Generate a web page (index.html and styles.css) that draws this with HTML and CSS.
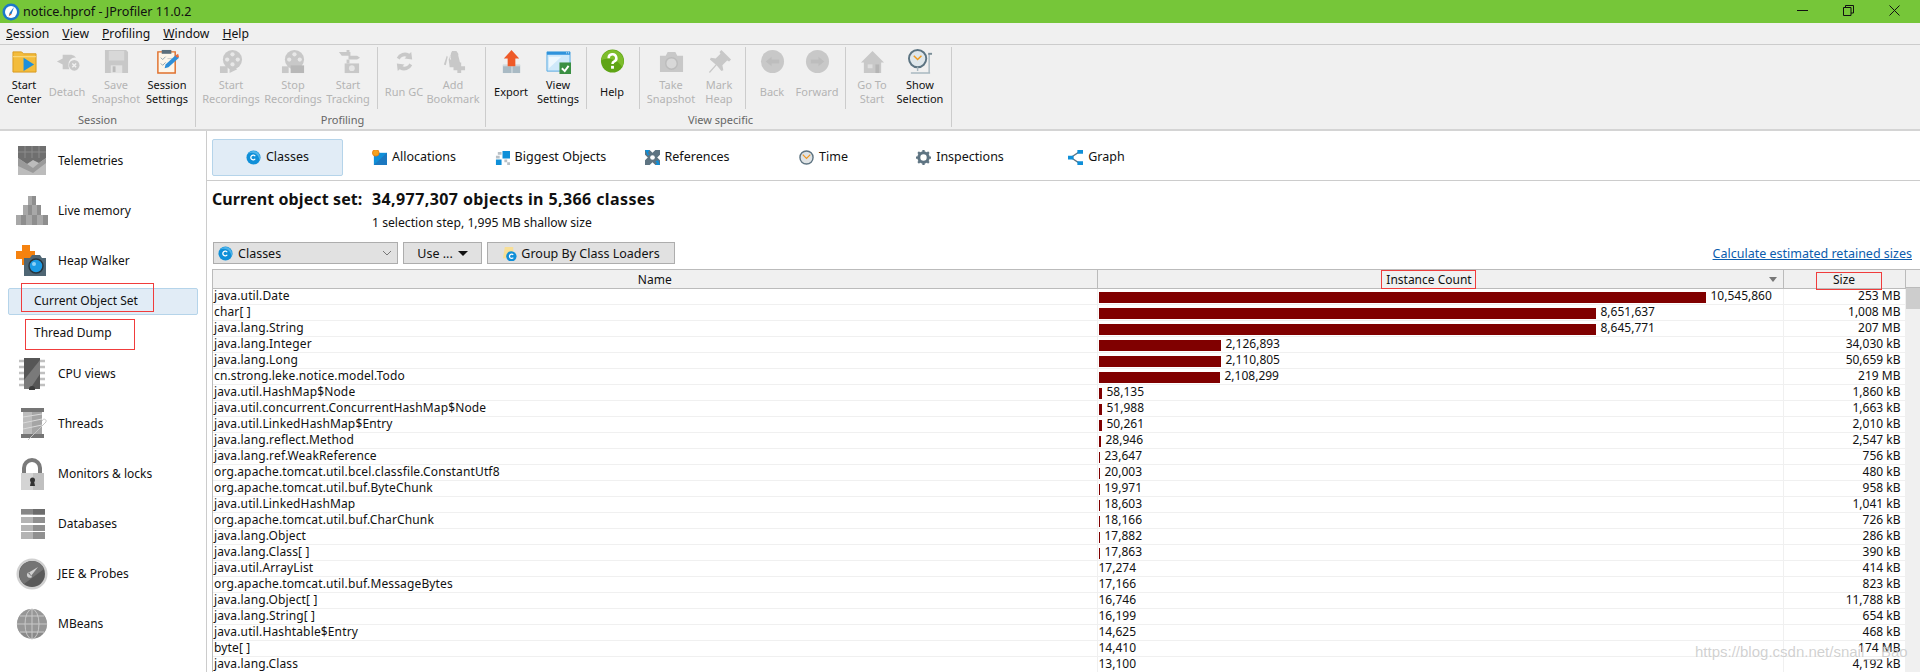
FILE: index.html
```html
<!DOCTYPE html>
<html lang="en">
<head>
    <meta charset="UTF-8">
    <title>notice.hprof - JProfiler 11.0.2</title>
    <link rel="stylesheet" href="styles.css">
</head>
<body>

    <svg class="defs" width="0" height="0">
        <symbol id="class-icon" viewBox="0 0 16 16">
            <circle cx="8" cy="8" r="7.5" fill="#0f8fd8"/>
            <path d="M8 1a7 7 0 0 1 6 10.500A8 8 0 0 0 2 4 7 7 0 0 1 8 1z" fill="#4fb4ea"/>
            <path d="M9.800 6.700A2.500 2.500 0 1 0 9.800 9.300" fill="none" stroke="#fff" stroke-width="1.400"/>
        </symbol>
    </svg>

    <div class="titlebar">
        <svg class="app-icon" width="18" height="18" viewBox="0 0 18 18">
            <circle cx="9" cy="9" r="8.500" fill="#1c78c8"/>
            <circle cx="9" cy="9" r="6" fill="#fff"/>
            <path d="M12 4 9.500 11 7 12.500 7.500 10z" fill="#1c78c8"/>
            <path d="M6.500 13.500 8 10.500 9.500 11.500z" fill="#e8622a"/>
        </svg>
        <span class="title-text">notice.hprof - JProfiler 11.0.2</span>
        <div class="win-buttons">
            <svg width="11" height="11" viewBox="0 0 11 11"><path d="M0 5.500h11" stroke="#111" fill="none"/></svg>
            <svg width="11" height="11" viewBox="0 0 11 11"><path d="M.5 2.500h7.500v8H.5zM2.500 2.500V.5h8v7.500H8" stroke="#111" fill="none"/></svg>
            <svg width="11" height="11" viewBox="0 0 11 11"><path d="M.5.5l10 10M10.500.5l-10 10" stroke="#111" fill="none"/></svg>
        </div>
    </div>

    <div class="menubar">
        <span class="menu-item"><u>S</u>ession</span>
        <span class="menu-item"><u>V</u>iew</span>
        <span class="menu-item"><u>P</u>rofiling</span>
        <span class="menu-item"><u>W</u>indow</span>
        <span class="menu-item"><u>H</u>elp</span>
    </div>

    <div class="toolbar">
        <div class="tb-group group-session">
            <div class="tb-row">
                <div class="tb-btn w48">
                    <svg class="tb-icon" viewBox="0 0 26 26"><path d="M1 3h9l2 2h13v19H1z" fill="#f3bc3c" stroke="#d99a1e"/><path d="M1 8h24" stroke="#fbe08c"/><path d="M12 9l11 7-11 7z" fill="#1c8fdc"/></svg>
                    <span class="tb-label">Start<br>Center</span>
                </div>
                <div class="tb-btn w38 off">
                    <svg class="tb-icon" viewBox="0 0 26 26"><path d="M2 13l6-3V6h9a7 7 0 0 1 5 3 7 7 0 0 0-8 8 7 7 0 0 0 1 4H8v-5z" fill="#c8c8c8"/><circle cx="20" cy="17" r="5.500" fill="#c8c8c8"/><path d="M18 15l4 4M22 15l-4 4" stroke="#f0f0f0" stroke-width="1.500"/></svg>
                    <span class="tb-label">Detach</span>
                </div>
                <div class="tb-btn w60 off">
                    <svg class="tb-icon" viewBox="0 0 26 26"><path d="M1 1h22l2 2v22H1z" fill="#c8c8c8"/><path d="M5 2h16v10H5z" fill="#d8d8d8"/><path d="M7 17h12v8H7z" fill="#e2e2e2"/><path d="M9 18h3v6H9z" fill="#bbb"/></svg>
                    <span class="tb-label">Save<br>Snapshot</span>
                </div>
                <div class="tb-btn w42">
                    <svg class="tb-icon" viewBox="0 0 26 26"><path d="M3 3h18v22H3z" fill="#fdf6ea" stroke="#e0702c" stroke-width="1.500"/><path d="M7 1h10v4H7z" fill="#5c6f7c"/><path d="M6 9l2 2 3-3M6 15l2 2 3-3" stroke="#8fa4b0" fill="none"/><path d="M13 10h5M13 16h3" stroke="#c8c8c8"/><path d="M10 20l1-4 11-10 3 3-11 10z" fill="#2f8fd8"/><path d="M21 7l3-2 1 3-2 1z" fill="#ea6a3c"/></svg>
                    <span class="tb-label">Session<br>Settings</span>
                </div>
            </div>
            <div class="tb-caption">Session</div>
        </div>

        <div class="tb-group group-profiling">
            <div class="tb-row">
                <div class="tb-btn w62 off">
                    <svg class="tb-icon" viewBox="0 0 26 26"><circle cx="14" cy="11" r="10" fill="#c8c8c8"/><circle cx="14" cy="5.500" r="2.200" fill="#e8e8e8"/><circle cx="8.500" cy="11" r="2.200" fill="#e8e8e8"/><circle cx="19.500" cy="11" r="2.200" fill="#e8e8e8"/><circle cx="14" cy="16" r="2.200" fill="#e8e8e8"/><path d="M1 18h8v7H1zM11 17l8 4-8 4z" fill="#c8c8c8"/></svg>
                    <span class="tb-label">Start<br>Recordings</span>
                </div>
                <div class="tb-btn w62 off">
                    <svg class="tb-icon" viewBox="0 0 26 26"><circle cx="14" cy="11" r="10" fill="#c8c8c8"/><circle cx="14" cy="5.500" r="2.200" fill="#e8e8e8"/><circle cx="8.500" cy="11" r="2.200" fill="#e8e8e8"/><circle cx="19.500" cy="11" r="2.200" fill="#e8e8e8"/><path d="M1 18h7v7H1z" fill="#c8c8c8"/><path d="M10 17h14v8H10z" fill="#b8b8b8"/></svg>
                    <span class="tb-label">Stop<br>Recordings</span>
                </div>
                <div class="tb-btn w48 mr3 off">
                    <svg class="tb-icon" viewBox="0 0 26 26"><path d="M11 1h3v6h-3zM3 3h12v4H6zM13 7h9l3 2-3 2h-9z" fill="#c8c8c8"/><path d="M11 11h3v4h-3z" fill="#c8c8c8"/><path d="M9 15h15v10H9z" fill="#c8c8c8"/><circle cx="16.500" cy="20" r="3" fill="#e6e6e6"/></svg>
                    <span class="tb-label">Start<br>Tracking</span>
                </div>
                <div class="tb-sep"></div>
                <div class="tb-btn w48 off">
                    <svg class="tb-icon" viewBox="0 0 26 26"><path d="M5 9a9 9 0 0 1 13-4l2-2 1 8-8-1 2-2a5.500 5.500 0 0 0-7 3zM21 17a9 9 0 0 1-13 4l-2 2-1-8 8 1-2 2a5.500 5.500 0 0 0 7-3z" fill="#c8c8c8"/></svg>
                    <span class="tb-label">Run GC</span>
                </div>
                <div class="tb-btn w50 off">
                    <svg class="tb-icon" viewBox="0 0 26 26"><path d="M11 2h5l2 3v14h-9l-1-8zM3 16l3-9 1 1-2 9zM15 6l3 1 2 8-2 1z" fill="#c8c8c8"/><path d="M17 14h4v4h4v4h-4v3h-4v-3h-4v-4h4z" fill="#c8c8c8"/><path d="M11 2c-2 3-2 6-1 9" stroke="#f0f0f0" fill="none"/></svg>
                    <span class="tb-label">Add<br>Bookmark</span>
                </div>
            </div>
            <div class="tb-caption">Profiling</div>
        </div>

        <div class="tb-group group-view">
            <div class="tb-row">
                <div class="tb-btn w42">
                    <svg class="tb-icon" viewBox="0 0 26 26"><path d="M4 17h18v8H4z" fill="#a9bac4"/><path d="M13 17h1v8h-1z" fill="#e0e6ea"/><path d="M4 16h18v2H4z" fill="#d2dade"/><path d="M13 1l8 9h-4v8H9v-8H5z" fill="#ee5a28"/></svg>
                    <span class="tb-label">Export</span>
                </div>
                <div class="tb-btn w52">
                    <svg class="tb-icon" viewBox="0 0 26 26"><path d="M1 3h24v20H1z" fill="#cfe9fa" stroke="#55a9e2"/><path d="M1 3h24v3H1z" fill="#2f93dc"/><path d="M21 4h1M23 4h1" stroke="#fff"/><path d="M3 20 16 8H3z" fill="#eef8fe"/><path d="M14 14h12v12H14z" fill="#3a8f43"/><path d="M16.500 20l3 3 4-5.500" fill="none" stroke="#fff" stroke-width="2"/></svg>
                    <span class="tb-label">View<br>Settings</span>
                </div>
                <div class="tb-sep"></div>
                <div class="tb-btn w46 mr2">
                    <svg class="tb-icon" viewBox="0 0 26 26"><circle cx="13" cy="12.500" r="12" fill="#5ea415"/><path d="M13 1a12 12 0 0 1 10 18A16 16 0 0 0 1 12 12 12 0 0 1 13 1z" fill="#7dbd2c"/><path d="M9 9.500a4 4 0 1 1 5.500 3.700c-1 .5-1.500 1-1.500 2.300" fill="none" stroke="#fff" stroke-width="2.600"/><path d="M11.500 17.500h3v3h-3z" fill="#fff"/></svg>
                    <span class="tb-label">Help</span>
                </div>
                <div class="tb-sep"></div>
                <div class="tb-btn w58 off">
                    <svg class="tb-icon" viewBox="0 0 26 26"><path d="M1 7h6l2-4h8l2 4h6v17H1z" fill="#c8c8c8"/><circle cx="13" cy="15" r="6" fill="#d8d8d8" stroke="#bcbcbc" stroke-width="1.500"/></svg>
                    <span class="tb-label">Take<br>Snapshot</span>
                </div>
                <div class="tb-btn w38 mr5 off">
                    <svg class="tb-icon" viewBox="0 0 26 26"><path d="M15 1l10 10-2 2-2-1-5 5 1 5-2 1-5-6-7 8-1-1 7-8-6-5 1-2 5 1 5-5-1-2z" fill="#c8c8c8"/></svg>
                    <span class="tb-label">Mark<br>Heap</span>
                </div>
                <div class="tb-sep"></div>
                <div class="tb-btn w48 off">
                    <svg class="tb-icon" viewBox="0 0 26 26"><circle cx="13" cy="13" r="12" fill="#c8c8c8"/><path d="M6 13l6-5v3h8v4h-8v3z" fill="#bdbdbd"/></svg>
                    <span class="tb-label">Back</span>
                </div>
                <div class="tb-btn w42 mr5 off">
                    <svg class="tb-icon" viewBox="0 0 26 26"><circle cx="13" cy="13" r="12" fill="#c8c8c8"/><path d="M20 13l-6-5v3H6v4h8v3z" fill="#bdbdbd"/></svg>
                    <span class="tb-label">Forward</span>
                </div>
                <div class="tb-sep"></div>
                <div class="tb-btn w48 off">
                    <svg class="tb-icon" viewBox="0 0 26 26"><path d="M13 2l12 12h-3v11H4V14H1z" fill="#c8c8c8"/><path d="M8 16h5v4H8z" fill="#dedede"/><path d="M16 16h4v9h-4z" fill="#b5b5b5"/></svg>
                    <span class="tb-label">Go To<br>Start</span>
                </div>
                <div class="tb-btn w48">
                    <svg class="tb-icon" viewBox="0 0 26 26"><circle cx="10" cy="10" r="9" fill="#dfe7eb" stroke="#5c7482" stroke-width="2"/><path d="M6 7l4 4 4-4" fill="none" stroke="#ef9a1e" stroke-width="1.500"/><path d="M10 19v4M3 25h20M22 5v20" stroke="#a8b8c0" stroke-width="1.500"/><path d="M21 5h4" stroke="#7a8e98" stroke-width="2"/></svg>
                    <span class="tb-label">Show<br>Selection</span>
                </div>
            </div>
            <div class="tb-caption">View specific</div>
        </div>
    </div>

    <div class="main">
        <div class="sidebar">
            <div class="nav-item">
                <svg class="nav-icon" viewBox="0 0 32 32"><path d="M2 1h28v29H2z" fill="#bcbcbc"/><path d="M2 1h28v12l-7 5-6-3-6 4-9-6z" fill="#6f6f6f"/><path d="M2 13l9 6 6 4 6-5 7-5v5l-13 10L2 21z" fill="#9a9a9a"/><path d="M9 1v12M16 1v12M23 1v12M2 7h28" stroke="#8c8c8c"/></svg>
                <span>Telemetries</span>
            </div>
            <div class="nav-item">
                <svg class="nav-icon" viewBox="0 0 32 32"><path d="M12 1h8v9h-8zM7 10h9v10H7zM16 10h9v10h-9zM0 20h10v10H0zM10 20h11v10H10zM21 20h11v10H21z" fill="#a8a8a8"/><path d="M16 1h4v9h-4zM12 10h4v10h-4zM21 10h4v10h-4zM5 20h5v10H5zM16 20h5v10h-5zM27 20h5v10h-5z" fill="#8e8e8e"/></svg>
                <span>Live memory</span>
            </div>
            <div class="nav-item">
                <svg class="nav-icon" viewBox="0 0 32 32"><path d="M6 0h8v6h5v8h-6v6H6v-6H0V6h6z" fill="#f5820f"/><path d="M8 13h6l2-3h8l2 3h4v18H8z" fill="#4f6674"/><circle cx="20" cy="21" r="7" fill="#1c9ae4" stroke="#27343c" stroke-width="1.500"/><circle cx="18" cy="19" r="2" fill="#8fd2f7"/></svg>
                <span>Heap Walker</span>
            </div>
            <div class="sub-item selected">Current Object Set</div>
            <div class="sub-item thread-dump">Thread Dump</div>
            <div class="nav-item">
                <svg class="nav-icon" viewBox="0 0 32 32"><path d="M8 0h16v31H8z" fill="#565656"/><path d="M8 22 24 2v14L14 31H8z" fill="#7a7a7a"/><path d="M3 3h5M3 9h5M3 15h5M3 21h5M3 27h5M24 3h5M24 9h5M24 15h5M24 21h5M24 27h5" stroke="#c0c0c0" stroke-width="2.500"/><circle cx="16" cy="31" r="3" fill="#3c3c3c"/></svg>
                <span>CPU views</span>
            </div>
            <div class="nav-item">
                <svg class="nav-icon" viewBox="0 0 32 32"><path d="M5 0h23v4H5zM5 26h23v4H5z" fill="#757575"/><path d="M7 4h19v22H7z" fill="#bcbcbc"/><path d="M16 4h10v22H16z" fill="#a5a5a5"/><path d="M7 9l19-3M7 15l19-4M7 21l19-4" stroke="#dadada"/><path d="M12 32 30 14c1-3-3-4-4-1" stroke="#c4c4c4" fill="none"/></svg>
                <span>Threads</span>
            </div>
            <div class="nav-item">
                <svg class="nav-icon" viewBox="0 0 32 32"><path d="M8 16V10a8 8 0 0 1 16 0v6" fill="none" stroke="#7a7a7a" stroke-width="4"/><path d="M5 15h23v17H5z" fill="#d4d4d4"/><path d="M17 15h11v17H17z" fill="#c0c0c0"/><circle cx="16.500" cy="22" r="2.500" fill="#333"/><path d="M15 23h3l1 5h-5z" fill="#333"/></svg>
                <span>Monitors &amp; locks</span>
            </div>
            <div class="nav-item">
                <svg class="nav-icon" viewBox="0 0 32 32"><path d="M5 1h12v6H5zM5 9h12v6H5zM5 17h12v6H5zM5 24h12v7H5z" fill="#b4b4b4"/><path d="M17 1h12v6H17zM17 9h12v6H17zM17 17h12v6H17zM17 24h12v7H17z" fill="#909090"/><path d="M5 1h24v5H5z" fill-opacity=".25"/></svg>
                <span>Databases</span>
            </div>
            <div class="nav-item">
                <svg class="nav-icon" viewBox="0 0 32 32"><circle cx="16" cy="16" r="15.500" fill="#d0d0d0"/><circle cx="16" cy="16" r="13" fill="#5a5a5a"/><path d="M16 3a13 13 0 0 1 12 8L8 26A13 13 0 0 1 16 3z" fill="#747474"/><path d="M22 9l-7 9-3-3zM13 14a3 3 0 1 0 3 5z" fill="#cfcfcf"/></svg>
                <span>JEE &amp; Probes</span>
            </div>
            <div class="nav-item">
                <svg class="nav-icon" viewBox="0 0 32 32"><circle cx="16" cy="16" r="15" fill="#8a8a8a"/><path d="M16 1a15 15 0 0 1 12 24L4 25A15 15 0 0 1 16 1z" fill="#a0a0a0" fill-opacity=".6"/><path d="M16 1v30M1 16h30M4 8h24M4 24h24" stroke="#c8c8c8"/><ellipse cx="16" cy="16" rx="7" ry="15" fill="none" stroke="#c8c8c8"/></svg>
                <span>MBeans</span>
            </div>
        </div>

        <div class="content">
            <div class="tabs">
                <div class="tab active"><svg class="tab-icon" viewBox="0 0 16 16"><use href="#class-icon"/></svg><span>Classes</span></div>
                <div class="tab"><svg class="tab-icon" viewBox="0 0 16 16"><path d="M2 3h14v13H2z" fill="#0f8fd8"/><path d="M2 16 16 3v13z" fill="#1b78c0"/><circle cx="4" cy="3" r="3.500" fill="#f5a21f" stroke="#e87f10"/></svg><span>Allocations</span></div>
                <div class="tab"><svg class="tab-icon" viewBox="0 0 16 16"><path d="M8 1h8v8H8zM1 10h6v6H1z" fill="#0f8fd8"/><path d="M3 2h4v3H3zM1 6h4v3H1zM10 10h3v3h-3zM13 13h3v3h-3z" fill="#b8c0c6"/></svg><span>Biggest Objects</span></div>
                <div class="tab"><svg class="tab-icon" viewBox="0 0 16 16"><path d="M0 0h5l3 3 3-3h5v5l-3 3 3 3v5h-5l-3-3-3 3H0v-5l3-3-3-3z" fill="#5e7482"/><path d="M0 0h5L3 3 5 5 3 6zM16 16h-5l2-2-2-2 3-1z" fill="#0f8fd8"/><circle cx="8" cy="8" r="2.500" fill="#fff"/></svg><span>References</span></div>
                <div class="tab"><svg class="tab-icon" viewBox="0 0 16 16"><circle cx="8" cy="8" r="7" fill="#dfe3e5" stroke="#5e7482" stroke-width="1.500"/><path d="M4 5l4 4 4-4" fill="none" stroke="#f0961e" stroke-width="1.300"/></svg><span>Time</span></div>
                <div class="tab"><svg class="tab-icon" viewBox="0 0 16 16"><circle cx="8" cy="8" r="5" fill="none" stroke="#5e7482" stroke-width="3.200"/><path d="M8 0v3M8 13v3M0 8h3M13 8h3M2.300 2.300l2 2M11.700 11.700l2 2M13.700 2.300l-2 2M4.300 11.700l-2 2" stroke="#5e7482" stroke-width="2.400"/></svg><span>Inspections</span></div>
                <div class="tab"><svg class="tab-icon" viewBox="0 0 16 16"><path d="M3 8 12 2M3 8l9 6" stroke="#5e7482" stroke-width="1.300"/><path d="M0 6h6v4H0zM10 0h6v4h-6zM10 12h6v4h-6z" fill="#0f8fd8"/></svg><span>Graph</span></div>
            </div>

            <div class="summary">
                <div class="summary-main"><span class="summary-name">Current object set:</span>34,977,307 objects in 5,366 classes</div>
                <div class="summary-sub">1 selection step, 1,995 MB shallow size</div>
            </div>

            <div class="controls">
                <div class="combo">
                    <svg class="tab-icon" viewBox="0 0 16 16"><use href="#class-icon"/></svg>
                    <span class="combo-text">Classes</span>
                    <svg width="10" height="6" viewBox="0 0 10 6"><path d="M1 1l4 4 4-4" fill="none" stroke="#777"/></svg>
                </div>
                <div class="btn btn-use">Use ... <span class="caret"></span></div>
                <div class="btn btn-group">
                    <svg class="tab-icon" viewBox="0 0 16 16"><path d="M3 1h9v12H1z" fill="#f8df96"/><circle cx="10" cy="11" r="5.500" fill="#0f8fd8"/><path d="M12 9.500A2.300 2.300 0 1 0 12 12.500" fill="none" stroke="#fff" stroke-width="1.300"/></svg>
                    Group By Class Loaders
                </div>
                <a class="retained-link" href="#">Calculate estimated retained sizes</a>
            </div>

            <div class="table-wrap">
                <table class="class-table">
                    <colgroup>
                        <col class="col-name">
                        <col class="col-count">
                        <col class="col-size">
                    </colgroup>
                    <thead>
                        <tr>
                            <th>Name</th>
                            <th class="th-count">Instance Count<span class="sort-arrow"></span></th>
                            <th>Size</th>
                        </tr>
                    </thead>
                    <tbody>
                        <tr><td>java.util.Date</td><td><div class="count"><i style="width:607px"></i>10,545,860</div></td><td>253 MB</td></tr>
                        <tr><td>char[ ]</td><td><div class="count"><i style="width:497px"></i>8,651,637</div></td><td>1,008 MB</td></tr>
                        <tr><td>java.lang.String</td><td><div class="count"><i style="width:497px"></i>8,645,771</div></td><td>207 MB</td></tr>
                        <tr><td>java.lang.Integer</td><td><div class="count"><i style="width:122px"></i>2,126,893</div></td><td>34,030 kB</td></tr>
                        <tr><td>java.lang.Long</td><td><div class="count"><i style="width:122px"></i>2,110,805</div></td><td>50,659 kB</td></tr>
                        <tr><td>cn.strong.leke.notice.model.Todo</td><td><div class="count"><i style="width:121px"></i>2,108,299</div></td><td>219 MB</td></tr>
                        <tr><td>java.util.HashMap$Node</td><td><div class="count"><i style="width:3px"></i>58,135</div></td><td>1,860 kB</td></tr>
                        <tr><td>java.util.concurrent.ConcurrentHashMap$Node</td><td><div class="count"><i style="width:3px"></i>51,988</div></td><td>1,663 kB</td></tr>
                        <tr><td>java.util.LinkedHashMap$Entry</td><td><div class="count"><i style="width:3px"></i>50,261</div></td><td>2,010 kB</td></tr>
                        <tr><td>java.lang.reflect.Method</td><td><div class="count"><i style="width:2px"></i>28,946</div></td><td>2,547 kB</td></tr>
                        <tr><td>java.lang.ref.WeakReference</td><td><div class="count"><i style="width:1px"></i>23,647</div></td><td>756 kB</td></tr>
                        <tr><td>org.apache.tomcat.util.bcel.classfile.ConstantUtf8</td><td><div class="count"><i style="width:1px"></i>20,003</div></td><td>480 kB</td></tr>
                        <tr><td>org.apache.tomcat.util.buf.ByteChunk</td><td><div class="count"><i style="width:1px"></i>19,971</div></td><td>958 kB</td></tr>
                        <tr><td>java.util.LinkedHashMap</td><td><div class="count"><i style="width:1px"></i>18,603</div></td><td>1,041 kB</td></tr>
                        <tr><td>org.apache.tomcat.util.buf.CharChunk</td><td><div class="count"><i style="width:1px"></i>18,166</div></td><td>726 kB</td></tr>
                        <tr><td>java.lang.Object</td><td><div class="count"><i style="width:1px"></i>17,882</div></td><td>286 kB</td></tr>
                        <tr><td>java.lang.Class[ ]</td><td><div class="count"><i style="width:1px"></i>17,863</div></td><td>390 kB</td></tr>
                        <tr><td>java.util.ArrayList</td><td><div class="count">17,274</div></td><td>414 kB</td></tr>
                        <tr><td>org.apache.tomcat.util.buf.MessageBytes</td><td><div class="count">17,166</div></td><td>823 kB</td></tr>
                        <tr><td>java.lang.Object[ ]</td><td><div class="count">16,746</div></td><td>11,788 kB</td></tr>
                        <tr><td>java.lang.String[ ]</td><td><div class="count">16,199</div></td><td>654 kB</td></tr>
                        <tr><td>java.util.Hashtable$Entry</td><td><div class="count">14,625</div></td><td>468 kB</td></tr>
                        <tr><td>byte[ ]</td><td><div class="count">14,410</div></td><td>174 MB</td></tr>
                        <tr><td>java.lang.Class</td><td><div class="count">13,100</div></td><td>4,192 kB</td></tr>
                    </tbody>
                </table>
                <div class="scrollbar"><div class="scroll-head"></div><div class="scroll-thumb"></div></div>
            </div>
        </div>
    </div>

    <!-- red boxes drawn over the screenshot -->
    <div class="mark mark-current"></div>
    <div class="mark mark-thread"></div>
    <div class="mark mark-count"></div>
    <div class="mark mark-size"></div>

    <div class="watermark">https://blog.csdn.net/snail__Bao</div>

</body>
</html>
```

FILE: styles.css
```css
html, body {
    margin: 0;
    padding: 0;
}

body {
    position: relative;
    width: 1920px;
    height: 672px;
    overflow: hidden;
    font-family: 'Noto Sans', 'Liberation Sans', sans-serif;
    font-size: 12px;
    color: #111;
    background-color: #fff;
}

.defs {
    position: absolute;
}

/* title bar */
.titlebar {
    display: flex;
    align-items: center;
    height: 23px;
    background-color: #76c639;
    padding-left: 2px;
}

.app-icon {
    margin-right: 3px;
}

.title-text {
    font-size: 12.600px;
    color: #111;
}

.win-buttons {
    display: flex;
    margin-left: auto;
    gap: 35px;
    padding: 0 20px 3px 0;
}

/* menu */
.menubar {
    display: flex;
    align-items: center;
    height: 21px;
    background-color: #f0f0f0;
    border-bottom: 1px solid #ccc;
    padding-left: 6px;
    gap: 13px;
    font-size: 12.200px;
}

/* toolbar */
.toolbar {
    display: flex;
    height: 84px;
    background-color: #f0f0f0;
    border-bottom: 2px solid #d4d4d4;
    font-size: 11px;
}

.tb-group {
    display: flex;
    flex-direction: column;
    box-sizing: border-box;
    height: 80px;
    margin-top: 2px;
    border-right: 1px solid #ccc;
}

.group-session {
    width: 196px;
}

.group-profiling {
    width: 290px;
    padding-left: 4px;
}

.group-view {
    width: 466px;
    padding-left: 4px;
}

.tb-row {
    display: flex;
    height: 63px;
}

.tb-btn {
    display: flex;
    flex-direction: column;
    align-items: center;
    padding-top: 2px;
    white-space: nowrap;
    color: #111;
}

.tb-btn.off {
    color: #b4b4b4;
}

.tb-icon {
    width: 25px;
    height: 25px;
    flex: none;
}

.tb-label {
    display: flex;
    align-items: center;
    height: 29px;
    margin-top: 3px;
    line-height: 14px;
    text-align: center;
}

.w38 { width: 38px; }
.w42 { width: 42px; }
.w46 { width: 46px; }
.w48 { width: 48px; }
.w50 { width: 50px; }
.w52 { width: 52px; }
.w58 { width: 58px; }
.w60 { width: 60px; }
.w62 { width: 62px; }
.mr2 { margin-right: 2px; }
.mr3 { margin-right: 3px; }
.mr5 { margin-right: 5px; }

.tb-sep {
    width: 1px;
    margin: 0 2px;
    background-color: #ccc;
}

.tb-caption {
    margin-top: 3px;
    text-align: center;
    color: #666;
}

/* main area */
.main {
    display: flex;
    height: 542px;
}

.sidebar {
    box-sizing: border-box;
    width: 207px;
    flex: none;
    padding-top: 5px;
    border-right: 1px solid #ccc;
}

.nav-item {
    display: flex;
    align-items: center;
    height: 50px;
    padding-left: 16px;
}

.nav-item span {
    margin-left: 10px;
    padding-bottom: 2px;
}

.nav-icon {
    width: 32px;
    height: 32px;
    flex: none;
}

.sub-item {
    padding-left: 26px;
    margin-left: 8px;
}

.selected {
    display: flex;
    align-items: center;
    box-sizing: border-box;
    width: 190px;
    height: 27px;
    margin-top: 2px;
    padding-left: 25px;
    padding-bottom: 2px;
    background-color: #e1ecf6;
    border: 1px solid #b5d4ea;
    border-radius: 2px;
}

.thread-dump {
    display: flex;
    align-items: center;
    height: 34px;
}

.content {
    flex: 1;
    min-width: 0;
}

.tabs {
    display: flex;
    gap: 5.500px;
    height: 50px;
    box-sizing: border-box;
    padding: 8px 0 0 5px;
    border-bottom: 1px solid #ccc;
    font-size: 12.500px;
}

.tab {
    display: flex;
    align-items: center;
    justify-content: center;
    box-sizing: border-box;
    width: 131px;
    height: 37px;
    gap: 5px;
}

.tab span {
    padding-bottom: 2px;
}

.tab.active {
    background-color: #e1ecf6;
    border: 1px solid #b5d4ea;
    border-radius: 2px;
}

.tab-icon {
    width: 15px;
    height: 15px;
    flex: none;
}

.summary {
    padding: 8px 0 0 5px;
    height: 50px;
    box-sizing: border-box;
}

.summary-main {
    font-size: 16px;
    font-weight: bold;
    letter-spacing: .4px;
    line-height: 20px;
}

.summary-name {
    display: inline-block;
    width: 160px;
    letter-spacing: .1px;
    white-space: nowrap;
}

.summary-sub {
    margin-top: 6px;
    padding-left: 160px;
    line-height: 16px;
    font-size: 12.200px;
}

.controls {
    display: flex;
    align-items: center;
    height: 22px;
    margin: 11px 8px 5px 6px;
    gap: 5px;
    font-size: 12.500px;
}

.combo,
.btn {
    display: flex;
    align-items: center;
    box-sizing: border-box;
    height: 22px;
    background-color: #e1e1e1;
    border: 1px solid #adadad;
}

.combo {
    width: 185px;
    padding: 0 5px 0 4px;
    gap: 5px;
}

.combo-text {
    flex: 1;
}

.btn {
    justify-content: center;
}

.btn-use {
    width: 79px;
    gap: 5px;
}

.btn-group {
    width: 188px;
    gap: 4px;
}

.caret {
    width: 0;
    height: 0;
    border-left: 5px solid transparent;
    border-right: 5px solid transparent;
    border-top: 5px solid #111;
}

.retained-link {
    margin-left: auto;
    color: #0b5cad;
}

/* table */
.table-wrap {
    display: flex;
    margin-left: 5px;
    border-left: 1px solid #bbb;
}

.class-table {
    border-collapse: collapse;
    table-layout: fixed;
    width: 1692px;
}

.col-name { width: 884px; }
.col-count { width: 686px; }
.col-size { width: 122px; }

.class-table th {
    height: 18px;
    padding: 0;
    font-weight: normal;
    background-color: #f0f0f0;
    border-top: 1px solid #bbb;
    border-bottom: 1px solid #bbb;
    border-right: 1px solid #bbb;
}

.th-count {
    position: relative;
    padding-right: 22px !important;
}

.sort-arrow {
    position: absolute;
    right: 6px;
    top: 7px;
    border-left: 4px solid transparent;
    border-right: 4px solid transparent;
    border-top: 5px solid #777;
}

.class-table td {
    height: 13px;
    padding: 0 1px 2px;
    line-height: 13px;
    white-space: nowrap;
    vertical-align: top;
    border-bottom: 1px solid #f0f0f0;
    border-right: 1px solid #f0f0f0;
}

.class-table td:first-child {
    letter-spacing: .14px;
}

.class-table td:last-child {
    text-align: right;
    padding-right: 4px;
}

.count {
    display: flex;
    align-items: center;
    height: 13px;
}

.count i {
    display: block;
    align-self: flex-start;
    height: 11px;
    margin: 3px 5px 0 0;
    background-color: #800000;
}

.scrollbar {
    flex: 1;
    background-color: #f0f0f0;
}

.scroll-head {
    height: 19px;
    box-sizing: border-box;
    background-color: #f0f0f0;
    border-top: 1px solid #bbb;
    border-bottom: 1px solid #bbb;
}

.scroll-thumb {
    height: 21px;
    background-color: #cdcdcd;
}

/* annotations */
.mark {
    position: absolute;
    box-sizing: border-box;
    border: 1px solid #f03c3c;
}

.mark-current {
    left: 21px;
    top: 283px;
    width: 133px;
    height: 29px;
}

.mark-thread {
    left: 25px;
    top: 319px;
    width: 110px;
    height: 31px;
}

.mark-count {
    left: 1381px;
    top: 270px;
    width: 95px;
    height: 19px;
}

.mark-size {
    left: 1816px;
    top: 272px;
    width: 66px;
    height: 18px;
}

.watermark {
    position: absolute;
    left: 1695px;
    top: 643px;
    font-family: 'Liberation Sans', sans-serif;
    font-size: 15px;
    white-space: nowrap;
    color: rgba(170, 170, 170, 0.55);
    text-shadow: 0 0 1px rgba(255, 255, 255, 0.8);
}
```
